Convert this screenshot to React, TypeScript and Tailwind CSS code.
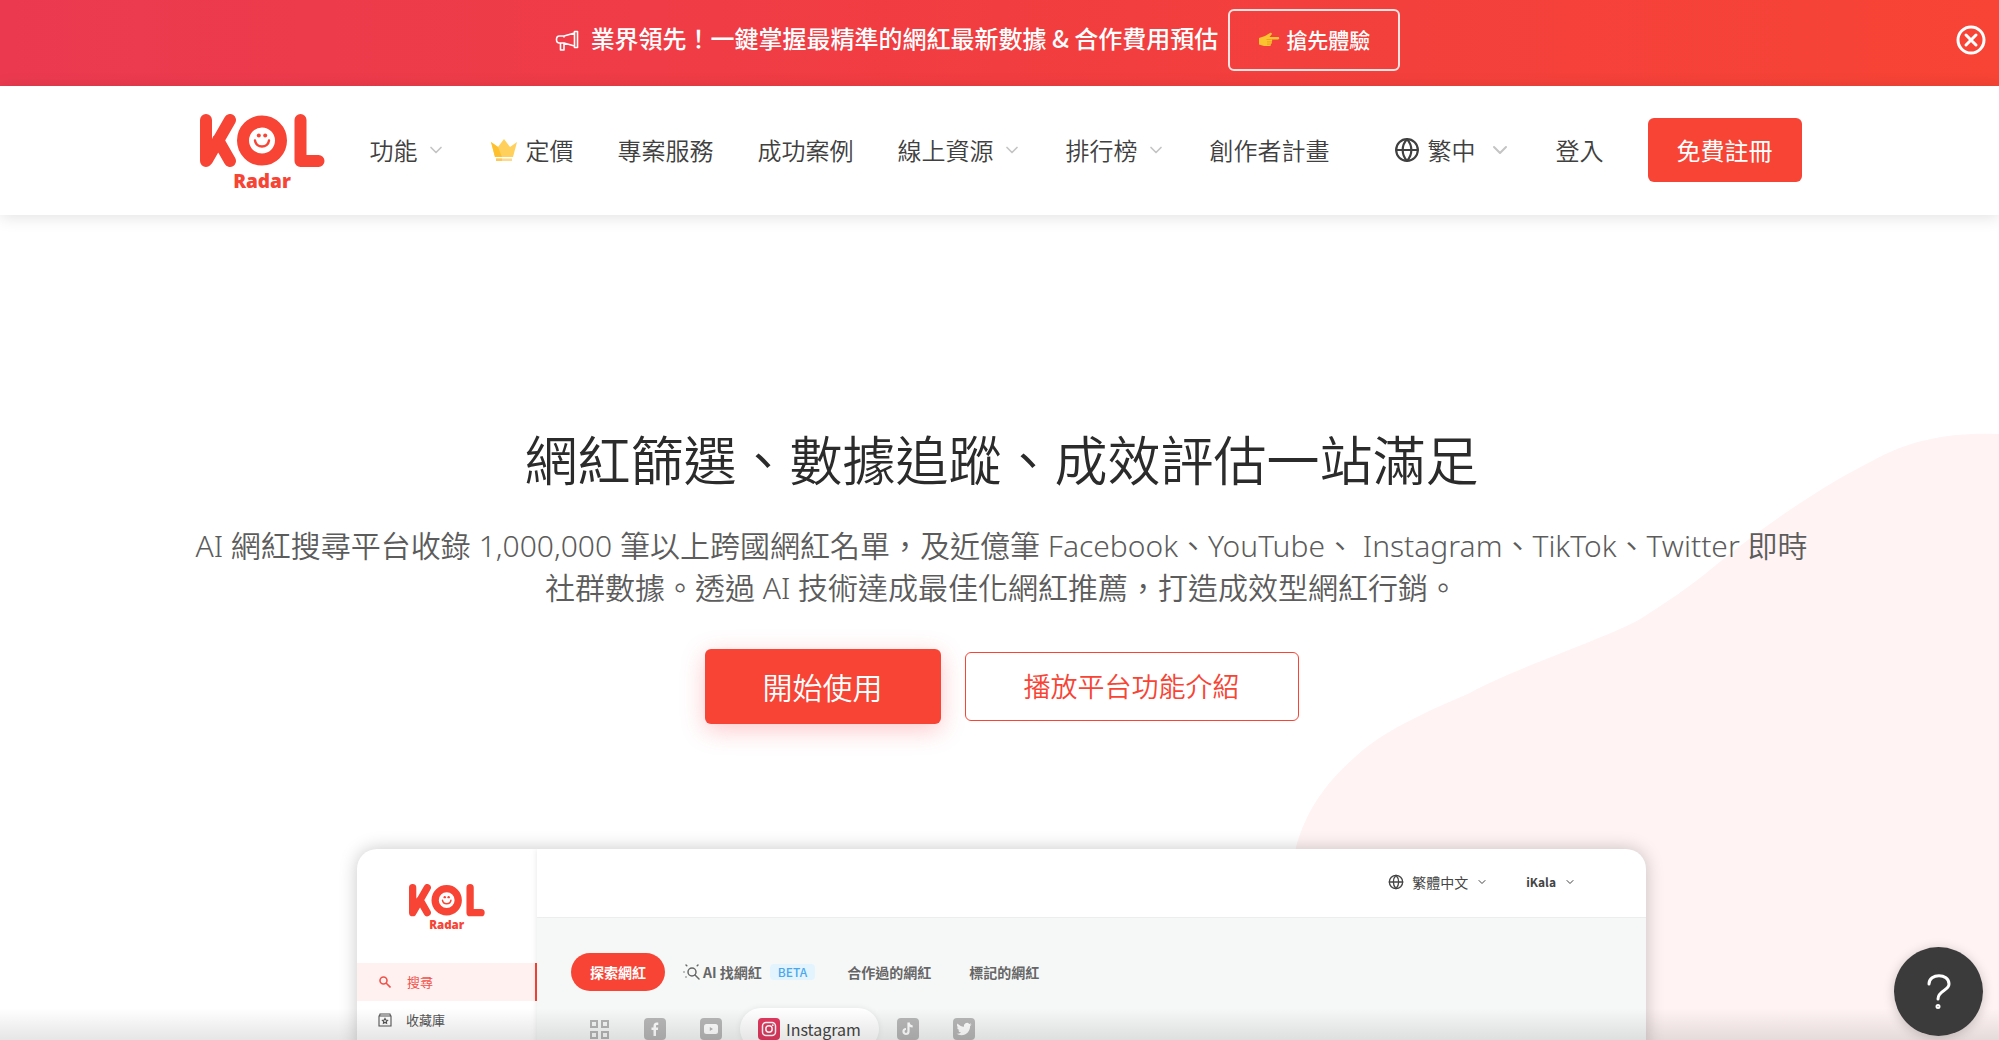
import { ChevronDown, Globe } from 'lucide-react';

interface NavItem {
  label: string;
  hasMenu?: boolean;
  crown?: boolean;
}

const NAV_ITEMS: NavItem[] = [
  { label: '功能', hasMenu: true },
  { label: '定價', crown: true },
  { label: '專案服務' },
  { label: '成功案例' },
  { label: '線上資源', hasMenu: true },
  { label: '排行榜', hasMenu: true },
  { label: '創作者計畫' },
];

function Logo({ className }: { className?: string }) {
  return (
    <svg viewBox="0 0 125 82" className={className} role="img" aria-label="KOL Radar">
      <g fill="none" stroke="#f74435" strokeWidth="12" strokeLinecap="round" strokeLinejoin="round">
        <path d="M6 6v41M30 6L7 46M18 26l12 21" />
        <circle cx="62" cy="26.5" r="19" />
        <path d="M100.5 6v41H118.5" />
      </g>
      <circle cx="58.8" cy="21.5" r="2" fill="#f74435" />
      <circle cx="65.2" cy="21.5" r="2" fill="#f74435" />
      <path d="M55 26.5c1 8 13 8 14 0" fill="none" stroke="#f74435" strokeWidth="2.4" strokeLinecap="round" />
      <text x="62" y="74" textAnchor="middle" fontSize="19" className="fill-[#f74435] font-['Noto_Sans'] font-black">
        Radar
      </text>
    </svg>
  );
}

function Megaphone() {
  return (
    <svg viewBox="0 0 24 24" className="size-6" fill="none" stroke="white" strokeWidth="1.6" strokeLinejoin="round" aria-hidden="true">
      <path d="M19.5 3.5h3v16h-3zM19.5 5L9 8H4.500C2.500 8 1.500 9.500 1.500 11.500S2.500 15 4.500 15H9l10.500 3M5.500 15v7h3.500v-7M9 8v1.500" />
    </svg>
  );
}

function PointingHand() {
  return (
    <svg viewBox="0 0 22 16" className="h-4 w-[22px]" aria-hidden="true">
      <path d="M1 6l6-2 5-3c2-1 2.500 1 1 2.200L11.500 5H20c1.600 0 1.600 2.400 0 2.400h-6.500c1 .6.9 2 0 2.400.7.8.4 2-.5 2.300.2 1.200-.6 1.900-2 1.900H6L1 12.500z" fill="#fcc331" />
      <path d="M8.500 7.500h5M9 9.900h4.500M9 12.100h4" stroke="#e89a1c" strokeWidth=".8" />
    </svg>
  );
}

function Crown() {
  return (
    <svg viewBox="0 0 28 24" className="h-6 w-7" aria-hidden="true">
      <path d="M1 4l7 5 6-8 6 8 7-5-4 15H5z" fill="#ffd15c" />
      <path d="M1 4l7 5 4 10H5z" fill="#ffc02e" />
      <path d="M6 20.500h16v2.500H6z" fill="#ffd98a" />
      <path d="M6 20.500h6v2.500H6z" fill="#ffc75a" />
    </svg>
  );
}

function TopBanner() {
  return (
    <div className="flex items-center bg-linear-to-r from-[#eb3a50] via-[#f23d40] to-[#f74435] pt-[9px] pr-3 pb-[15px] text-white">
      <div className="flex flex-1 items-center justify-center">
        <Megaphone />
        <p className="ml-3 pb-1 text-2xl font-medium">業界領先！一鍵掌握最精準的網紅最新數據 &amp; 合作費用預估</p>
        <button className="ml-2.5 flex h-[62px] items-center gap-1.5 rounded-md border-2 border-white/85 px-7 text-[21px] font-medium">
          <PointingHand />
          搶先體驗
        </button>
      </div>
      <button aria-label="關閉">
        <svg viewBox="0 0 32 32" className="size-8" fill="none" stroke="white" strokeWidth="3" strokeLinecap="round" aria-hidden="true">
          <circle cx="16" cy="16" r="13" />
          <path d="M11 11l10 10M21 11L11 21" />
        </svg>
      </button>
    </div>
  );
}

function Navbar() {
  return (
    <header className="relative z-10 bg-white pl-0.5 shadow-[0_2px_16px_rgba(0,0,0,0.12)]">
      <div className="mx-auto flex max-w-[1602px] items-center pt-8 pb-[33px] text-2xl font-[350] text-[#404040]">
        <a href="#home" className="-my-4 pt-2.5">
          <Logo className="h-[82px] w-[125px]" />
        </a>
        <nav className="ml-[45px] flex items-center gap-11">
          {NAV_ITEMS.map((item) => (
            <a key={item.label} href={`#${item.label}`} className="flex items-center whitespace-nowrap">
              {item.crown && <span className="mr-2"><Crown /></span>}
              {item.label}
              {item.hasMenu && <ChevronDown className="ml-2 size-5 text-[#c4c4c4]" strokeWidth={2} />}
            </a>
          ))}
        </nav>
        <div className="ml-auto flex items-center gap-11 whitespace-nowrap">
          <button className="flex items-center">
            <Globe className="mr-2 size-[26px]" strokeWidth={2} />
            繁中
            <ChevronDown className="ml-3 size-6 text-[#c4c4c4]" strokeWidth={2} />
          </button>
          <a href="#login">登入</a>
          <a href="#signup" className="flex h-16 items-center rounded-md bg-[#f74435] px-[29px] font-normal text-white">免費註冊</a>
        </div>
      </div>
    </header>
  );
}

function AiSearchIcon() {
  return (
    <svg viewBox="0 0 18 18" className="size-[18px]" fill="none" stroke="currentColor" strokeWidth="1.5" strokeLinecap="round" aria-hidden="true">
      <circle cx="9" cy="9" r="4" />
      <path d="M12 12l4 4M3 2l.8.8M14.200 2.800L15 2M1 9h.01M3 14h.01" />
    </svg>
  );
}

const TILE = 'size-[22px] shrink-0';

function GridIcon() {
  return (
    <svg viewBox="0 0 22 22" className={TILE} fill="none" stroke="#b5b5b5" strokeWidth="2" aria-hidden="true">
      <path d="M3 3h6v6h-6zM14 3h6v6h-6zM3 14h6v6h-6zM14 14h6v6h-6z" />
    </svg>
  );
}

function FacebookIcon() {
  return (
    <svg viewBox="0 0 22 22" className={TILE} aria-hidden="true">
      <rect width="22" height="22" rx="4" fill="#b8b8b8" />
      <path d="M9.500 18v-6H7.500V9.500h2V8c0-2.300 1.200-3.500 3.200-3.500h1.600v2.400h-1.200c-.8 0-1.100.4-1.100 1.100v1.500h2.200l-.3 2.500H12v6z" fill="white" />
    </svg>
  );
}

function YoutubeIcon() {
  return (
    <svg viewBox="0 0 22 22" className={TILE} aria-hidden="true">
      <rect width="22" height="22" rx="4" fill="#b8b8b8" />
      <rect x="4" y="6" width="14" height="10" rx="2.5" fill="white" />
      <path d="M9.800 9v4l3.200-2z" fill="#b8b8b8" />
    </svg>
  );
}

function InstagramIcon() {
  return (
    <svg viewBox="0 0 22 22" className={TILE} aria-hidden="true">
      <rect width="22" height="22" rx="4" fill="#e1395f" />
      <g fill="none" stroke="white" strokeWidth="1.5">
        <rect x="4.5" y="4.5" width="13" height="13" rx="3.5" />
        <circle cx="11" cy="11" r="3.2" />
      </g>
      <circle cx="14.8" cy="7.2" r=".9" fill="white" />
    </svg>
  );
}

function TiktokIcon() {
  return (
    <svg viewBox="0 0 22 22" className={TILE} aria-hidden="true">
      <rect width="22" height="22" rx="4" fill="#b8b8b8" />
      <path d="M11.500 4.500v9a2.500 2.500 0 1 1-2.500-2.500M11.500 4.500c.3 2.300 1.800 3.800 4.200 4" fill="none" stroke="white" strokeWidth="2.2" />
    </svg>
  );
}

function TwitterIcon() {
  return (
    <svg viewBox="0 0 22 22" className={TILE} aria-hidden="true">
      <rect width="22" height="22" rx="4" fill="#b8b8b8" />
      <path
        transform="translate(3.5 3.5) scale(.63)"
        d="M23.950 4.570a10 10 0 0 1-2.820.77 4.960 4.960 0 0 0 2.160-2.720c-.95.55-2 .95-3.130 1.180a4.920 4.920 0 0 0-8.380 4.480C7.690 8.090 4.070 6.130 1.640 3.160a4.920 4.920 0 0 0 1.520 6.570 4.900 4.900 0 0 1-2.230-.61v.06a4.920 4.920 0 0 0 3.950 4.830 5 5 0 0 1-2.210.08 4.940 4.940 0 0 0 4.600 3.420A9.870 9.870 0 0 1 0 19.540a13.990 13.990 0 0 0 7.550 2.210c9.050 0 14-7.500 14-13.980 0-.21 0-.42-.02-.63a9.940 9.940 0 0 0 2.460-2.550z"
        fill="white"
      />
    </svg>
  );
}

function PlatformPreview() {
  return (
    <div className="relative mt-[125px] flex w-full max-w-[1289px] flex-1 overflow-hidden rounded-t-[20px] bg-white shadow-[0_0_18px_rgba(0,0,0,0.22)]">
      <aside className="w-[180px] shrink-0 text-[13px] text-[#555]">
        <Logo className="mx-auto mt-[35px] h-[50px] w-[76px]" />
        <a href="#search" className="mt-[29px] flex h-[38px] items-center border-r-2 border-[#f74435] bg-[#fff1f0] pl-[22px] text-[#f0524a]">
          <svg viewBox="0 0 12 12" className="mr-4 size-3" fill="none" stroke="currentColor" strokeWidth="1.6" aria-hidden="true">
            <circle cx="4.5" cy="4.5" r="3.5" />
            <path d="M7 7l4.500 4.500" />
          </svg>
          搜尋
        </a>
        <a href="#collection" className="flex h-[38px] items-center pl-[21px]">
          <svg viewBox="0 0 14 14" className="mr-[14px] size-[14px]" fill="none" stroke="currentColor" strokeWidth="1.1" aria-hidden="true">
            <path d="M1 3h12v10H1zM1.500 3l.5-2h10l.5 2M7 5.500l.8 1.600 1.700.2-1.200 1.200.3 1.700L7 9.400l-1.600.8.3-1.700-1.200-1.200 1.700-.2z" />
          </svg>
          收藏庫
        </a>
      </aside>
      <div className="flex flex-1 flex-col shadow-[0_0_6px_rgba(0,0,0,0.1)]">
        <div className="flex h-[69px] shrink-0 items-center justify-end border-b border-[#eceeee] pr-[70px] pb-4 pt-[14px] text-sm text-[#444]">
          <button className="flex items-center">
            <Globe className="mr-2 size-4" strokeWidth={2} />
            繁體中文
            <ChevronDown className="ml-2 size-3" strokeWidth={2} />
          </button>
          <button className="ml-[38px] flex items-center text-xs font-bold">
            iKala
            <ChevronDown className="ml-2 size-3" strokeWidth={2} />
          </button>
        </div>
        <div className="flex-1 bg-[#f6f8f8] pt-[35px] pl-[34px]">
          <div className="flex items-center text-sm font-bold text-[#666]">
            <button className="h-[38px] rounded-full bg-[#f74435] px-[19px] text-white">探索網紅</button>
            <button className="ml-[18px] flex items-center">
              <AiSearchIcon />
              <span className="ml-0.5">AI 找網紅</span>
              <span className="ml-2 rounded bg-[#e3f4fe] px-2 text-xs font-medium text-[#4ba8ec]">BETA</span>
            </button>
            <button className="ml-8">合作過的網紅</button>
            <button className="ml-[38px]">標記的網紅</button>
          </div>
          <div className="mt-[17px] ml-[17px] flex items-center">
            <button aria-label="全部"><GridIcon /></button>
            <button className="ml-[34px]" aria-label="Facebook"><FacebookIcon /></button>
            <button className="ml-[34px]" aria-label="YouTube"><YoutubeIcon /></button>
            <button className="mx-[18px] flex h-[42px] items-center gap-1.5 rounded-full bg-white px-[18px] text-base text-[#444] shadow-[0_0_6px_rgba(0,0,0,0.08)]">
              <InstagramIcon />
              Instagram
            </button>
            <button aria-label="TikTok"><TiktokIcon /></button>
            <button className="ml-[34px]" aria-label="Twitter"><TwitterIcon /></button>
          </div>
        </div>
      </div>
    </div>
  );
}

export default function App() {
  return (
    <div className="relative flex h-screen flex-col overflow-hidden bg-white font-['Noto_Sans_CJK_TC','Noto_Sans',sans-serif]">
      <TopBanner />
      <Navbar />
      <main className="relative flex flex-1 flex-col items-center pt-[207px] pl-1 text-center">
        {/* 右側粉色背景 */}
        <svg viewBox="0 0 729 620" className="absolute top-[205px] right-0 h-[620px] w-[729px]" aria-hidden="true">
          <path d="M729 14C680 12 640 20 604 40C560 62 505 97 446 145C420 167 395 183 372 198C345 215 240 250 200 273C160 290 120 308 93 330C60 358 38 385 26 427C15 480 15 550 30 620H729z" fill="#fff3f3" />
        </svg>
        <h1 className="relative text-[53px] leading-[72px] font-[350] text-[#2b2b2b]">網紅篩選、數據追蹤、成效評估一站滿足</h1>
        <p className="relative mt-[31px] font-['Noto_Sans','Noto_Sans_CJK_TC',sans-serif] text-[30px] leading-[42px] font-[350] text-[#5c5c5c]">
          AI 網紅搜尋平台收錄 1,000,000 筆以上跨國網紅名單，及近億筆 Facebook、YouTube、 Instagram、TikTok、Twitter 即時
          <br />
          社群數據。透過 AI 技術達成最佳化網紅推薦，打造成效型網紅行銷。
        </p>
        <div className="relative mt-10 flex items-center gap-6">
          <button className="h-[75px] rounded-md bg-[#f74435] px-[58px] text-[30px] font-[350] text-white shadow-[0_6px_24px_rgba(247,68,80,0.3)]">開始使用</button>
          <button className="h-[69px] rounded-md border border-[#f74435] bg-white px-[58px] text-[27px] font-[350] text-[#f74435]">播放平台功能介紹</button>
        </div>
        <PlatformPreview />
      </main>
      <div className="pointer-events-none absolute inset-x-0 bottom-0 h-8 bg-linear-to-t from-black/10 to-transparent" />
      <button aria-label="說明" className="fixed right-4 bottom-1 flex size-[89px] items-center justify-center rounded-full bg-[#3b3b3b] shadow-[0_2px_12px_rgba(0,0,0,0.2)]">
        <svg viewBox="0 0 24 36" className="h-9 w-6" fill="none" stroke="white" strokeWidth="3" strokeLinecap="round" aria-hidden="true">
          <path d="M2 10C2 -1 22 -1 22 10C22 17 11 16 11 25" />
          <circle cx="11" cy="32.5" r="1" />
        </svg>
      </button>
    </div>
  );
}
